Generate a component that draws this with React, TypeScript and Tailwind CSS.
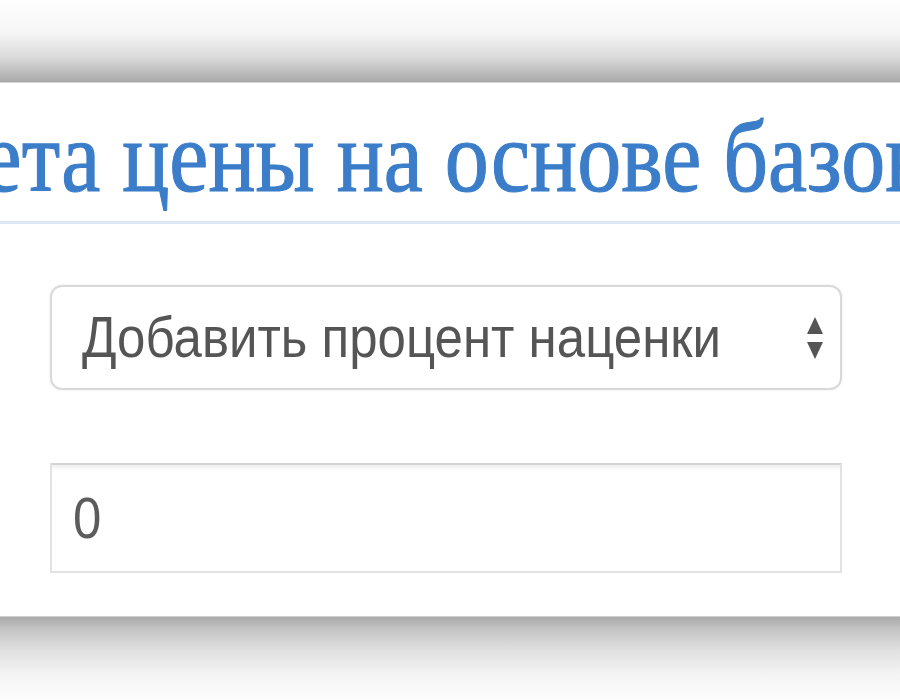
const App = () => {
  return (
    <div className="w-[900px] h-[700px] overflow-hidden bg-white flex flex-col">
      {/* тень сверху */}
      <div className="h-[83px] shrink-0 bg-[linear-gradient(to_bottom,#fdfdfd_0%,#f6f6f6_40%,#dadada_70%,#b9b9b9_90%,#a9a9a9_100%)] border-b border-[#d6d6d6]"></div>

      {/* панель */}
      <div className="flex flex-col bg-white pb-[43px]">
        <div className="pt-[30px] pb-[20px] border-b-[3px] border-[#dde8f4] overflow-hidden">
          <div
            className="whitespace-nowrap leading-none text-[88px] text-[#3b7dc9] scale-y-[1.16] -ml-[182px] [-webkit-text-stroke:1px_#3b7dc9]"
            style={{ fontFamily: '"Liberation Serif", serif' }}
          >
            расчета цены на основе базовой цены
          </div>
        </div>

        <div
          className="mt-[61px] ml-[50px] w-[792px] h-[105px] rounded-[12px] border-2 border-[#d9d9d9] shadow-[0_0_3px_rgba(0,0,0,0.08)] flex items-center pl-[30px] pr-[16px] text-[#555555]"
          style={{ fontFamily: '"Liberation Sans", Arial, sans-serif' }}
        >
          <span className="flex-1 leading-none text-[51px] scale-y-[1.12] origin-left">
            Добавить процент наценки
          </span>
          <svg width="18" height="42" viewBox="0 0 18 42">
            <path d="M9 0 L17 17 L1 17 Z" fill="#555555" />
            <path d="M1 25 L17 25 L9 42 Z" fill="#555555" />
          </svg>
        </div>

        <div
          className="mt-[73px] ml-[50px] w-[792px] h-[110px] border-2 border-[#e2e2e2] border-t-[#d4d4d4] shadow-[inset_0_6px_4px_-3px_rgba(0,0,0,0.07)] flex items-center pl-[21px] text-[#5c5c5c]"
          style={{ fontFamily: '"Liberation Sans", Arial, sans-serif' }}
        >
          <span className="leading-none text-[51px] scale-y-[1.12]">0</span>
        </div>
      </div>

      {/* тень снизу */}
      <div className="flex-1 border-t border-[#cfcfcf] bg-[linear-gradient(to_bottom,#a9a9a9_0%,#c4c4c4_15%,#e0e0e0_40%,#f4f4f4_70%,#fdfdfd_100%)]"></div>
    </div>
  );
};

export default App;
